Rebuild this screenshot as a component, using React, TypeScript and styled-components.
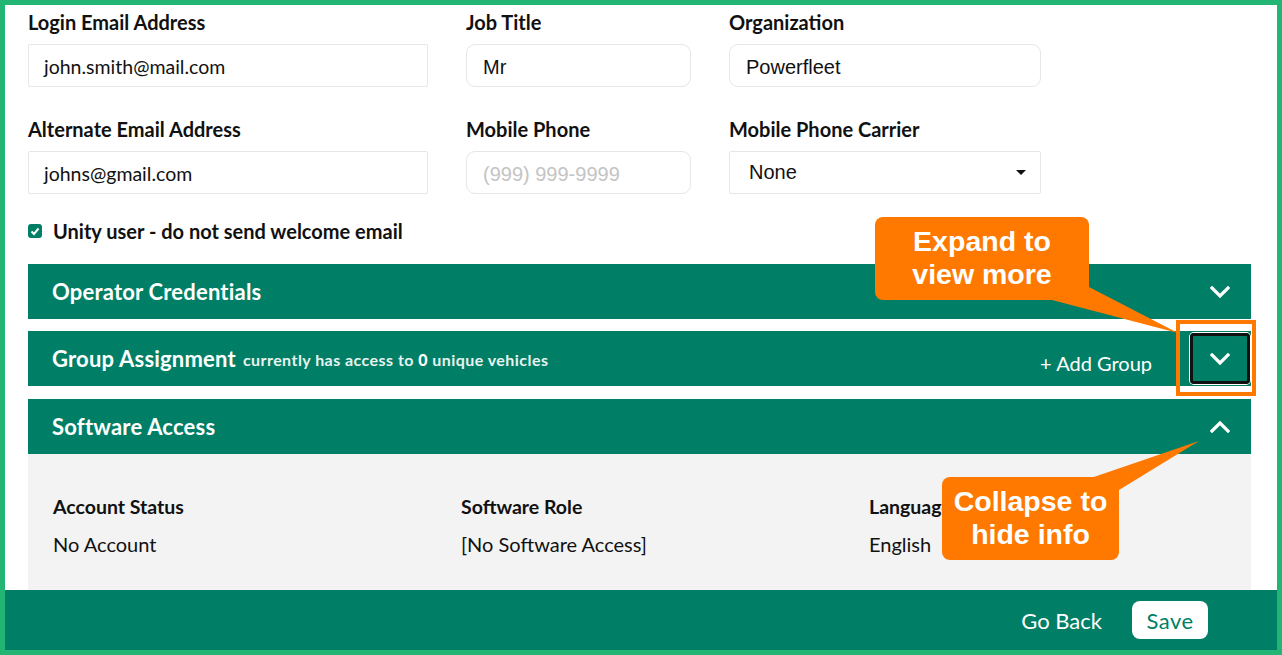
import { FC, ReactNode } from 'react';
import styled, { createGlobalStyle } from 'styled-components';

const GlobalStyle = createGlobalStyle`
  html, body {
    margin: 0;
    padding: 0;
    background: #ffffff;
  }
  * {
    box-sizing: border-box;
  }
`;

const GREEN = '#007f66';
const FRAME = '#22b573';
const ORANGE = '#ff7900';

const Page = styled.div`
  position: relative;
  width: 1282px;
  height: 655px;
  border: 5px solid ${FRAME};
  display: flex;
  flex-direction: column;
  overflow: hidden;
  font-family: Lato, 'Noto Sans', sans-serif;
  color: #111;
`;

const Main = styled.div`
  flex: 1;
  overflow: hidden;
  padding: 6px 26px 0 23px;
`;

const FormGrid = styled.div`
  display: grid;
  grid-template-columns: 400px 225px 312px;
  column-gap: 38px;
  row-gap: 31px;
`;

const Field = styled.div`
  display: flex;
  flex-direction: column;
  gap: 11px;
`;

const Label = styled.label`
  font-size: 20px;
  line-height: 22px;
  font-weight: 700;
`;

const Input = styled.div<{ $rounded?: boolean; $placeholder?: boolean; $arial?: boolean }>`
  height: 43px;
  border: 1px solid #e6e6e6;
  border-radius: ${(p) => (p.$rounded ? '9px' : '2px')};
  padding: ${(p) => (p.$arial ? '3px 16px 0' : '1px 15px 0')};
  display: flex;
  align-items: center;
  font-size: ${(p) => (p.$arial ? '20px' : '19.5px')};
  font-family: ${(p) => (p.$arial ? "'Liberation Sans', Arial, sans-serif" : "Lato, 'Noto Sans', sans-serif")};
  color: ${(p) => (p.$placeholder ? '#c4c4c4' : '#111')};
`;

const Select = styled(Input)`
  justify-content: space-between;
  padding: 0 14px 0 19px;
`;

const Caret = styled.span`
  width: 0;
  height: 0;
  border-left: 5px solid transparent;
  border-right: 5px solid transparent;
  border-top: 5px solid #111;
`;

const CheckRow = styled.div`
  display: flex;
  align-items: center;
  gap: 11px;
  margin-top: 23px;
  height: 28px;
  font-size: 20px;
  font-weight: 700;
`;

const CheckBox = styled.span`
  width: 14px;
  height: 14px;
  border-radius: 3px;
  background: ${GREEN};
  display: inline-flex;
  align-items: center;
  justify-content: center;
`;

const Sections = styled.div`
  margin-top: 19px;
  display: flex;
  flex-direction: column;
  gap: 12px;
`;

const Section = styled.div<{ $push?: number }>`
  margin-top: ${(p) => p.$push ?? 0}px;
`;

const Header = styled.div`
  position: relative;
  height: 55px;
  background: ${GREEN};
  color: #fff;
  display: flex;
  align-items: center;
  padding-left: 24px;
  padding-right: 1px;
`;

const Title = styled.span`
  font-size: 22px;
  font-weight: 700;
  letter-spacing: 0.2px;
`;

const SubTitle = styled.span`
  font-size: 16px;
  font-weight: 700;
  letter-spacing: 0.45px;
  margin-left: 7px;
  margin-top: 2px;
  color: #e8f2ef;
`;

const Spacer = styled.div`
  flex: 1;
`;

const AddGroup = styled.span`
  font-size: 20px;
  margin-right: 38px;
  margin-top: 8px;
`;

const Toggle = styled.button<{ $focused?: boolean }>`
  width: 60px;
  height: 51px;
  background: transparent;
  border: 3px solid ${(p) => (p.$focused ? '#111' : 'transparent')};
  border-radius: 4px;
  box-shadow: ${(p) => (p.$focused ? '0 0 0 1px #fff' : 'none')};
  display: flex;
  align-items: center;
  justify-content: center;
  padding: 0;
`;

const Highlight = styled.div`
  position: absolute;
  top: -11px;
  right: -5px;
  width: 80px;
  height: 76px;
  border: 4px solid ${ORANGE};
  pointer-events: none;
`;

const Body = styled.div`
  background: #f3f3f3;
  padding: 42px 25px 50px;
  display: grid;
  grid-template-columns: 408px 408px 1fr;
`;

const Info = styled.div`
  display: flex;
  flex-direction: column;
  gap: 15px;
`;

const InfoLabel = styled.div`
  font-size: 19.5px;
  line-height: 22px;
  font-weight: 700;
`;

const InfoValue = styled.div`
  font-size: 20px;
  line-height: 22px;
`;

const Footer = styled.div`
  height: 60px;
  flex-shrink: 0;
  background: ${GREEN};
  display: flex;
  align-items: center;
  justify-content: flex-end;
  padding-right: 69px;
  gap: 30px;
`;

const GoBack = styled.span`
  color: #fff;
  font-size: 22px;
`;

const SaveButton = styled.button`
  height: 38px;
  width: 76px;
  border: none;
  border-radius: 8px;
  background: #fff;
  color: ${GREEN};
  font-family: Lato, 'Noto Sans', sans-serif;
  font-size: 22px;
  letter-spacing: 0.5px;
  padding: 0;
`;

/* overlays: positioned inside the page border (origin at 5,5) */
const Callout = styled.div<{ $x: number; $y: number; $w: number }>`
  position: absolute;
  left: ${(p) => p.$x}px;
  top: ${(p) => p.$y}px;
  width: ${(p) => p.$w}px;
  height: 83px;
  background: ${ORANGE};
  border-radius: 8px;
  color: #fff;
  font-family: 'Liberation Sans', Arial, sans-serif;
  font-weight: 700;
  font-size: 28.5px;
  line-height: 33px;
  text-align: center;
  padding-top: 8px;
  pointer-events: none;
`;

const Tails = styled.svg`
  position: absolute;
  left: 0;
  top: 0;
  pointer-events: none;
`;

const Chevron: FC<{ up?: boolean }> = ({ up }) => (
  <svg width="20" height="12" viewBox="0 0 20 12">
    <polyline
      points={up ? '2,10 10,2 18,10' : '2,2 10,10 18,2'}
      fill="none"
      stroke="#fff"
      strokeWidth="3.2"
      strokeLinecap="square"
    />
  </svg>
);

type AccordionProps = {
  title: string;
  extra?: ReactNode;
  open?: boolean;
  focused?: boolean;
  push?: number;
  children?: ReactNode;
};

const Accordion: FC<AccordionProps> = ({ title, extra, open, focused, push, children }) => (
  <Section $push={push}>
    <Header>
      <Title>{title}</Title>
      {extra}
      <Toggle $focused={focused}>
        <Chevron up={open} />
      </Toggle>
      {focused && <Highlight />}
    </Header>
    {open && children}
  </Section>
);

export default function App() {
  return (
    <>
      <GlobalStyle />
      <Page>
        <Main>
          <FormGrid>
            <Field>
              <Label>Login Email Address</Label>
              <Input>john.smith@mail.com</Input>
            </Field>
            <Field>
              <Label>Job Title</Label>
              <Input $rounded $arial>Mr</Input>
            </Field>
            <Field>
              <Label>Organization</Label>
              <Input $rounded $arial>Powerfleet</Input>
            </Field>
            <Field>
              <Label>Alternate Email Address</Label>
              <Input>johns@gmail.com</Input>
            </Field>
            <Field>
              <Label>Mobile Phone</Label>
              <Input $rounded $arial $placeholder>(999) 999-9999</Input>
            </Field>
            <Field>
              <Label>Mobile Phone Carrier</Label>
              <Select $arial>
                None
                <Caret />
              </Select>
            </Field>
          </FormGrid>

          <CheckRow>
            <CheckBox>
              <svg width="10" height="9" viewBox="0 0 10 9">
                <polyline points="1.5,4.5 4,7 8.5,1.5" fill="none" stroke="#fff" strokeWidth="2" />
              </svg>
            </CheckBox>
            Unity user - do not send welcome email
          </CheckRow>

          <Sections>
            <Accordion title="Operator Credentials" extra={<Spacer />} />
            <Accordion
              title="Group Assignment"
              focused
              extra={
                <>
                  <SubTitle>
                    currently has access to <b style={{ color: '#fff' }}>0</b> unique vehicles
                  </SubTitle>
                  <Spacer />
                  <AddGroup>+ Add Group</AddGroup>
                </>
              }
            />
            <Accordion title="Software Access" open push={1} extra={<Spacer />}>
              <Body>
                <Info>
                  <InfoLabel>Account Status</InfoLabel>
                  <InfoValue>No Account</InfoValue>
                </Info>
                <Info>
                  <InfoLabel>Software Role</InfoLabel>
                  <InfoValue>[No Software Access]</InfoValue>
                </Info>
                <Info>
                  <InfoLabel>Language</InfoLabel>
                  <InfoValue>English</InfoValue>
                </Info>
              </Body>
            </Accordion>
          </Sections>
        </Main>

        <Footer>
          <GoBack>Go Back</GoBack>
          <SaveButton>Save</SaveButton>
        </Footer>

        <Tails width="1272" height="645">
          <polygon points="1047,295 1082,281 1173,328" fill={ORANGE} />
          <polygon points="1083,474 1114,485 1194,436" fill={ORANGE} />
        </Tails>
        <Callout $x={870} $y={212} $w={214}>
          Expand to
          <br />
          view more
        </Callout>
        <Callout $x={937} $y={472} $w={177}>
          Collapse to
          <br />
          hide info
        </Callout>
      </Page>
    </>
  );
}
